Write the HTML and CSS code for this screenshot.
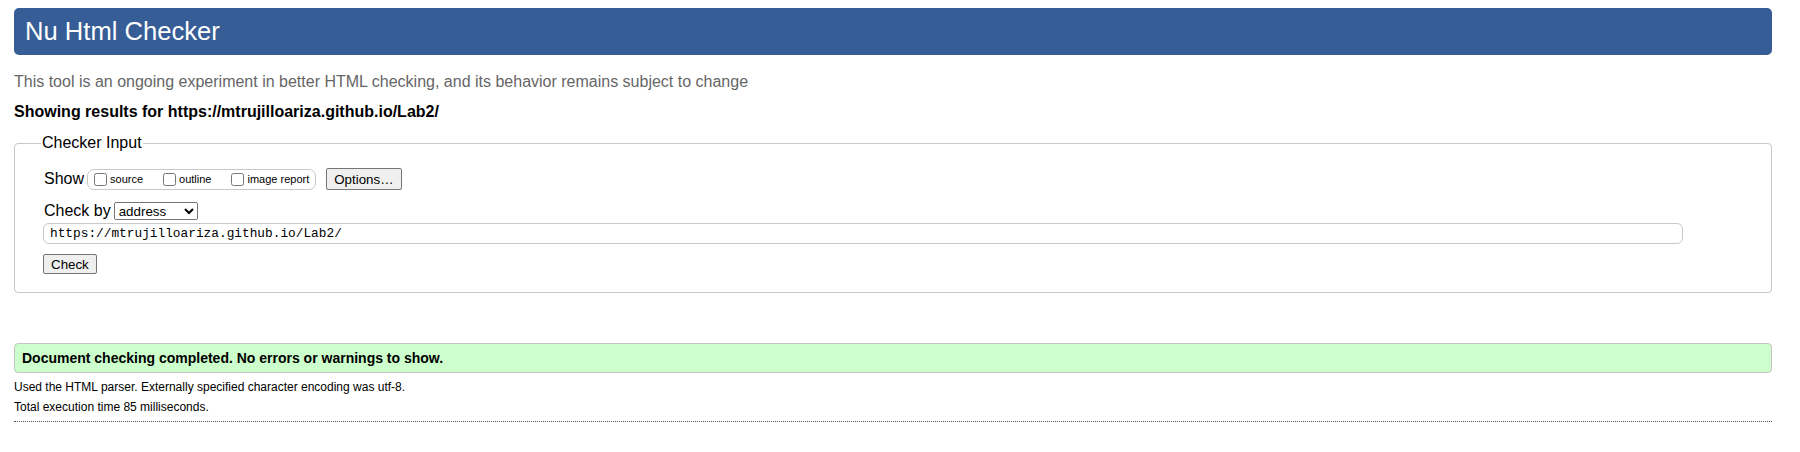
FILE: index.html
```html
<!DOCTYPE html>
<html lang="en">
<head>
<meta charset="utf-8">
<title>Nu Html Checker</title>
<link rel="stylesheet" href="styles.css">
</head>
<body>
<h1 class="title">Nu Html Checker</h1>
<p class="intro">This tool is an ongoing experiment in better HTML checking, and its behavior remains subject to change</p>
<p class="showing">Showing results for https://mtrujilloariza.github.io/Lab2/</p>
<fieldset class="input-box">
  <legend class="legend">Checker Input</legend>
  <div class="row show-row">
    <span class="row-label">Show</span>
    <span class="opts">
      <label class="opt"><input type="checkbox" class="cb">source</label>
      <label class="opt"><input type="checkbox" class="cb">outline</label>
      <label class="opt"><input type="checkbox" class="cb">image report</label>
    </span>
    <button class="btn options-btn" type="button">Options…</button>
  </div>
  <div class="row check-row">
    <span class="row-label">Check by</span>
    <select class="sel"><option>address</option></select>
  </div>
  <div class="url-row">
    <input class="url" type="text" value="https://mtrujilloariza.github.io/Lab2/">
  </div>
  <div class="submit-row">
    <button class="btn check-btn" type="button">Check</button>
  </div>
</fieldset>
<p class="success">Document checking completed. No errors or warnings to show.</p>
<p class="meta">Used the HTML parser. Externally specified character encoding was utf-8.</p>
<p class="meta">Total execution time 85 milliseconds.</p>
<hr class="rule">
</body>
</html>
```
FILE: styles.css
```css
html, body {
  background: #ffffff;
}
body {
  margin: 0;
  padding: 8px 28px 0 14px;
  font-family: "Liberation Sans", Arial, sans-serif;
  color: #000;
}
.title {
  margin: 0;
  height: 47px;
  box-sizing: border-box;
  padding: 0 11px;
  display: flex;
  align-items: center;
  background: #365d95;
  color: #fff;
  font-weight: normal;
  font-size: 25.6px;
  border-radius: 5px;
}
.intro {
  margin: 18px 0 0 0;
  font-size: 16px;
  line-height: 18px;
  color: #666;
}
.showing {
  margin: 12px 0 0 0;
  font-size: 16px;
  line-height: 18px;
  font-weight: bold;
}
.input-box {
  margin: 13px 0 0 0;
  padding: 0 0 18px 29px;
  border: 1px solid #c8c8c8;
  border-radius: 4px;
  min-width: 0;
}
.legend {
  margin-left: -3px;
  padding: 0 1px;
  font-size: 16px;
  color: #000;
}
.row {
  display: flex;
  align-items: center;
}
.show-row {
  margin-top: 15px;
  height: 24px;
}
.row-label {
  font-size: 16px;
  margin-right: 3px;
}
.opts {
  display: flex;
  align-items: center;
  height: 19px;
  border: 1px solid #c8c8c8;
  border-radius: 7px;
  padding: 0 6px 0 5px;
  gap: 19px;
}
.opt {
  display: flex;
  align-items: flex-end;
  font-size: 11px;
  line-height: 13px;
}
.cb {
  width: 13px;
  height: 13px;
  margin: 0 3px 0 1px;
}
.btn {
  font-family: "Liberation Sans", Arial, sans-serif;
  font-size: 13.33px;
  color: #000;
  background: #efefef;
  border: 1px solid #767676;
  border-radius: 2px;
  padding: 0 6px;
}
.options-btn {
  margin-left: 10px;
  height: 22px;
  padding: 0 7px;
}
.check-row {
  margin-top: 9px;
  height: 22px;
}
.sel {
  font-family: "Liberation Sans", Arial, sans-serif;
  font-size: 13.33px;
  height: 18px;
  width: 84px;
  color: #000;
}
.url-row {
  margin-top: 1px;
}
.url {
  box-sizing: border-box;
  width: 1640px;
  margin-left: -1px;
  height: 21px;
  padding: 0 6px;
  border: 1px solid #c8c8c8;
  border-radius: 6px;
  font-family: "Liberation Mono", "DejaVu Sans Mono", monospace;
  font-size: 12.8px;
  color: #000;
}
.submit-row {
  margin-top: 10px;
}
.check-btn {
  margin-left: -1px;
  height: 20px;
  padding: 0 7px;
}
.success {
  margin: 50px 0 0 0;
  height: 30px;
  box-sizing: border-box;
  display: flex;
  align-items: center;
  padding: 0 7px;
  background: #ccffcc;
  border: 1px solid #c4c4c4;
  border-radius: 4px;
  font-weight: bold;
  font-size: 14px;
}
.meta {
  margin: 7px 0 0 0;
  font-size: 12px;
  line-height: 14px;
  color: #000;
}
.meta + .meta {
  margin-top: 6px;
}
.rule {
  margin: 7px 0 0 0;
  border: 0;
  border-top: 1px dotted #555;
  height: 0;
}
```
